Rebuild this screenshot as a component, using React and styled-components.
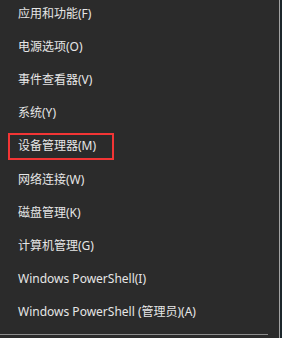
import React from 'react';
import styled, { createGlobalStyle } from 'styled-components';

const GlobalStyle = createGlobalStyle`
  html, body {
    margin: 0;
    padding: 0;
    background: #1c262b;
    overflow: hidden;
  }
`;

const items = [
  { label: '应用和功能(F)' },
  { label: '电源选项(O)' },
  { label: '事件查看器(V)' },
  { label: '系统(Y)' },
  { label: '设备管理器(M)', marked: true },
  { label: '网络连接(W)' },
  { label: '磁盘管理(K)' },
  { label: '计算机管理(G)' },
  { label: 'Windows PowerShell(I)' },
  { label: 'Windows PowerShell (管理员)(A)' },
];

const App = () => {
  return (
    <>
      <GlobalStyle />
      <Menu>
        <ItemList>
          {items.map((item) => (
            <Item key={item.label}>
              <Label $marked={item.marked}>{item.label}</Label>
            </Item>
          ))}
        </ItemList>
        <Separator />
      </Menu>
    </>
  );
};

export default App;

const Menu = styled.div`
  width: 280px;
  height: 338px;
  background: #2b2b2b;
  border-right: 1px solid #a3a3a3;
  box-sizing: border-box;
  overflow: hidden;
  font-family: 'Noto Sans', 'Noto Sans CJK SC', sans-serif;
  font-size: 12px;
  color: #e6e6e6;
`;

const ItemList = styled.ul`
  list-style: none;
  margin: -3px 0 0;
  padding: 0;
`;

const Item = styled.li`
  height: 33.2px;
  display: flex;
  align-items: center;
  padding-left: 18px;
`;

const Label = styled.span`
  line-height: 20px;
  white-space: nowrap;
  ${({ $marked }) =>
    $marked &&
    `
    border: 2px solid #f23535;
    padding: 1.5px 16px 1.5px 8px;
    margin-left: -10px;
  `}
`;

const Separator = styled.div`
  margin-top: 5px;
  width: 268px;
  height: 1px;
  background: #8c8c8c;
`;
